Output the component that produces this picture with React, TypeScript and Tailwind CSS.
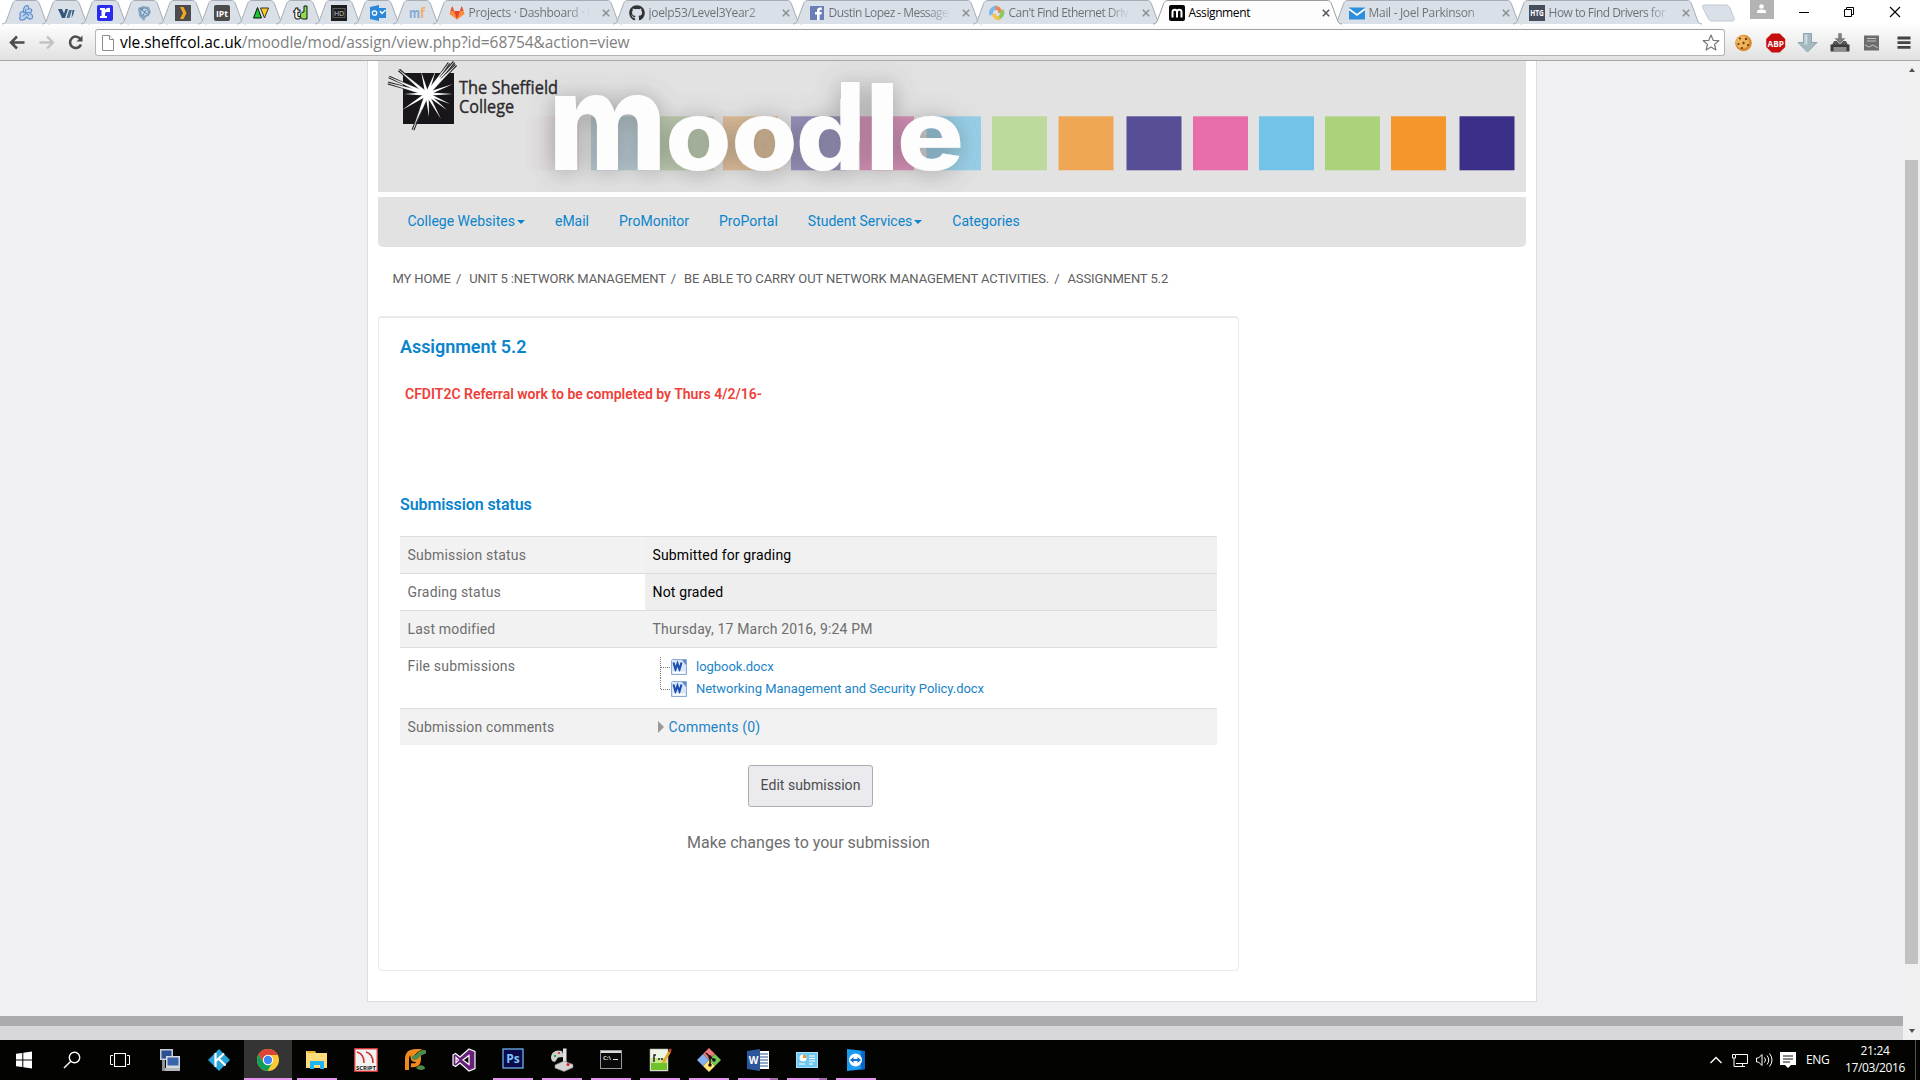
import type { ReactNode } from "react";
import { FaGithub } from "react-icons/fa";

/* ---------- favicons ---------- */

const Fav = ({ children }: { children: ReactNode }) => (
  <svg width="16" height="16" viewBox="0 0 16 16" className="shrink-0 overflow-visible">
    {children}
  </svg>
);

const txt = { fontFamily: "Open Sans, sans-serif", textAnchor: "middle" as const };

const pinned: ReactNode[] = [
  <Fav key="a">
    <g fill="#bcd2f0" stroke="#5f8fcc" strokeWidth="1.2">
      <path d="M8 .8c2-.8 3.200.8 2.200 3.200 2.500-.8 4.300.6 3.300 2.600-.6 1-1.600 1.200-2.300 1.300 3 1 4.500 4 2.800 5.500-1.500 1.300-4 .5-5.500-1.500-1 2-3 3.300-5 3.200-2-.2-2.700-2.500-.8-4C1.500 9.800 1.500 7.500 3.500 6.800c.8-.2 1.500 0 2 .2C5 5 6 1.600 8 .8z" />
      <path d="M8 4c-1 2 0 3 0 4s2 1 3 3M8 8c-1 2-2 2-3 3M5.500 7L8 8l3-.5" fill="none" />
    </g>
  </Fav>,
  <Fav key="b">
    <path d="M0 4h4l2 4.500L7.500 4H10L7 13H4z" fill="#35587a" />
    <path d="M8.500 13L11 5h3l-2.500 8z" fill="#4a7398" />
    <path d="M13.500 13L14.500 5h2l-1.500 5z" fill="#35587a" />
  </Fav>,
  <Fav key="c">
    <rect width="16" height="16" rx="2" fill="#2a2af0" />
    <path d="M3 3h5v2c1-1.500 3-2.500 5-2v4h-3c-1 0-2 .5-2 2v2h2v2H3v-2h1.500V5H3z" fill="#fff" />
  </Fav>,
  <Fav key="d">
    <path d="M2 3l5-2 6 1 2 5-2 4-3 1-2 4-3-3-2-2z" fill="#8aa6c0" />
    <circle cx="8.500" cy="7" r="4" fill="#c3d6e6" stroke="#5c84aa" strokeWidth=".8" />
    <path d="M6 5l5 4M7 10l3-5M4 3l3 2" stroke="#4f7ba5" strokeWidth=".9" />
  </Fav>,
  <Fav key="e">
    <rect width="16" height="16" fill="#4c4c4c" />
    <path d="M5 2h3.500l3 6-3 6H5l3-6z" fill="#f5a623" />
  </Fav>,
  <Fav key="f">
    <rect width="16" height="16" rx="2" fill="#4c4c4c" />
    <text x="8" y="11.500" fontSize="9" fontWeight="700" fill="#fff" textLength="12" lengthAdjust="spacingAndGlyphs" {...txt}>IPt</text>
  </Fav>,
  <Fav key="g">
    <path d="M4.500 2.500L8.500 13h-8z" fill="#19c832" stroke="#111" />
    <path d="M7.500 3h8l-4 10z" fill="#ffc81e" stroke="#333" />
  </Fav>,
  <Fav key="h">
    <text x="5" y="14" fontSize="16" fontWeight="800" fill="#fff" stroke="#111" strokeWidth="1" {...txt}>t</text>
    <path d="M12 1h3v13h-3c-4 1-5-6-1-7h1z" fill="#8ede4a" stroke="#111" />
  </Fav>,
  <Fav key="i">
    <rect y="0" width="16" height="16" fill="#1c1c1c" />
    <rect x="2" y="3.500" width="12" height="9" fill="none" stroke="#777" strokeWidth=".7" />
    <text x="8" y="10.500" fontSize="7" fill="#ccc" {...txt}>HD</text>
  </Fav>,
  <Fav key="j">
    <path d="M0 2l9-2v16l-9-2z" fill="#2b88d8" />
    <path d="M9 3h7v10H9z" fill="#2b88d8" />
    <circle cx="4.500" cy="8" r="2.200" fill="none" stroke="#fff" strokeWidth="1.300" />
    <path d="M10 6l2 2.500L15.500 5" fill="none" stroke="#fff" strokeWidth="1.300" />
  </Fav>,
  <Fav key="k">
    <text x="5.500" y="13" fontSize="14" fontWeight="700" fill="#85a9d2" textLength="11" lengthAdjust="spacingAndGlyphs" {...txt}>m</text>
    <text x="13.500" y="13" fontSize="14" fontWeight="700" fill="#f0b070" textLength="5" lengthAdjust="spacingAndGlyphs" {...txt}>f</text>
  </Fav>,
];

const gitlab = (
  <Fav>
    <path d="M8 14.500L.5 9l1-3L3.200 1 5.200 6h5.600l2-5 1.700 5 1 3z" fill="#fc8a3c" />
    <path d="M8 14.500L5.200 6h5.600z" fill="#e24329" />
    <path d="M3.200 1L1.500 6h3.700zM12.800 1l1.700 5h-3.700z" fill="#e2553a" />
  </Fav>
);
const facebook = (
  <Fav>
    <rect x="1" y="1" width="14" height="14" fill="#6a7fb8" />
    <path d="M8 15V9.500H6V7h2V5.500C8 3.500 9.300 2.500 11 2.500h1.800V5H11.500c-.7 0-.9.300-.9.900V7h2.200l-.3 2.500h-1.900V15z" fill="#fff" />
  </Fav>
);
const swirl = (
  <Fav>
    <g fill="none" strokeWidth="3.800">
      <path d="M2.500 10C.5 6 4 2.500 8 2.500" stroke="#7ab9ea" />
      <path d="M6.500 2.800C10 3 11 4.500 11.500 8" stroke="#ee8450" />
      <path d="M13 5c1.500 3.500-.5 7-3.500 8" stroke="#8cc860" />
      <path d="M10.500 13.500C7 13.500 5.500 12 4.500 9" stroke="#f6c34a" />
    </g>
  </Fav>
);
const moodleFav = (
  <Fav>
    <rect width="16" height="16" rx="2" fill="#050505" />
    <path d="M3.500 12.500V7c0-3 4.500-3 4.500 0v5.500V7c0-3 4.500-3 4.500 0v5.500" fill="none" stroke="#fff" strokeWidth="2" />
  </Fav>
);
const mail = (
  <Fav>
    <rect y="2.500" width="16" height="12" fill="#2b8fdc" />
    <path d="M0 4l8 6 8-6" fill="none" stroke="#fff" strokeWidth="1.600" />
  </Fav>
);
const htg = (
  <Fav>
    <rect width="16" height="16" fill="#454c5c" />
    <text x="8" y="11.200" fontSize="8.500" fontWeight="700" fill="#fff" textLength="13.500" lengthAdjust="spacingAndGlyphs" {...txt}>HTG</text>
  </Fav>
);

/* ---------- browser chrome ---------- */

const Shape = ({ w, active }: { w: number; active?: boolean }) => {
  const d = `M0 24C3 24 4 22 5 19L10.500 4C11.500 1.500 12.500 .5 15 .5H${w - 15}C${w - 12.5} .5 ${w - 11.5} 1.500 ${w - 10.5} 4L${w - 5} 19C${w - 4} 22 ${w - 3} 24 ${w} 24`;
  return (
    <svg className="absolute left-0 top-0" width={w} height="25" viewBox={`0 0 ${w} 25`}>
      <path d={active ? `${d}V25H0Z` : d} fill={active ? "#fdfdfd" : "#dae0e8"} />
      <path d={d} fill="none" stroke={active ? "#9d9d9d" : "#a9adb3"} />
    </svg>
  );
};

const Close = ({ dark }: { dark?: boolean }) => (
  <svg width="8" height="8" viewBox="0 0 8 8" className="shrink-0">
    <path d="M.8.8l6.400 6.400M7.200.8L.8 7.200" stroke={dark ? "#555" : "#8b8e93"} strokeWidth="1.500" />
  </svg>
);

const Tab = ({ icon, title, active, tight }: { icon: ReactNode; title: string; active?: boolean; tight?: boolean }) => (
  <div className={active ? "relative z-10 -mr-[9px] h-[25px] w-[189px] shrink-0" : "relative -mr-[9px] h-[25px] w-[189px] shrink-0"}>
    <Shape w={189} active={active} />
    <div className="relative flex h-[25px] items-center pl-4">
      {icon}
      <span
        className={
          active
            ? "ml-1 w-[122px] whitespace-nowrap text-[12px] tracking-[-0.4px] text-black"
            : tight
              ? "ml-1 w-[122px] whitespace-nowrap bg-gradient-to-r from-[#6b6f75] from-80% to-transparent bg-clip-text text-[12px] tracking-[-0.550px] text-transparent"
              : "ml-1 w-[122px] whitespace-nowrap bg-gradient-to-r from-[#6b6f75] from-80% to-transparent bg-clip-text text-[12px] tracking-[-0.320px] text-transparent"
        }
      >
        {title}
      </span>
      <span className="ml-[11.500px]">
        <Close dark={active} />
      </span>
    </div>
  </div>
);

const TabStrip = () => (
  <div className="flex h-[25px] bg-white pl-[2.400px]">
    {pinned.map((icon, i) => (
      <div key={i} className="relative -mr-[8.900px] h-[25px] w-12 shrink-0">
        <Shape w={48} />
        <div className="relative flex h-[26px] items-center justify-center">{icon}</div>
      </div>
    ))}
    <Tab icon={gitlab} title="Projects · Dashboard · G" />
    <Tab icon={<FaGithub size={16} color="#333" className="shrink-0" />} title="joelp53/Level3Year2" />
    <Tab icon={facebook} title="Dustin Lopez - Message" tight />
    <Tab icon={swirl} title="Can't Find Ethernet Driv" tight />
    <Tab icon={moodleFav} title="Assignment" active />
    <Tab icon={mail} title="Mail - Joel Parkinson" />
    <Tab icon={htg} title="How to Find Drivers for" tight />
    <svg width="34" height="18" viewBox="0 0 34 18" className="ml-2 mt-1 shrink-0">
      <path d="M3 1h22c2 0 3 1 4 3l4 10c.6 2 0 3-2 3H11c-2 0-3-1-4-3L2 4C1.500 2 1.500 1 3 1z" fill="#dae0e8" stroke="#c3c8ce" />
    </svg>
    <div className="ml-[15.100px] flex h-[19px] w-6 shrink-0 items-center justify-center bg-[#b3b3b3]">
      <svg width="9" height="10" viewBox="0 0 9 10" fill="#fff" className="-mt-[2px]">
        <circle cx="4.500" cy="2.500" r="2.300" />
        <path d="M0 9V7.500C0 6 2 5.500 4.500 5.500S9 6 9 7.500V9z" />
      </svg>
    </div>
    <svg width="130" height="24" viewBox="1790 0 130 24" className="ml-4 shrink-0" fill="none" stroke="#000">
      <path d="M1799 12.500h10" />
      <path d="M1844.500 9.500h7v7h-7zM1846.500 9.500v-2h7v7h-2" />
      <path d="M1890 7l10 10M1900 7l-10 10" strokeWidth="1.100" />
    </svg>
  </div>
);

const Toolbar = () => (
  <div className="flex h-9 items-center border-b border-b-[#a8a8a8] bg-gradient-to-b from-[#fdfdfd] to-[#e1e1e1]">
    <svg width="95" height="34" viewBox="0 26 95 34" className="shrink-0" fill="none">
      <path d="M24.500 42.500H11.500M17 36.500l-6 6 6 6" stroke="#4c4c4c" strokeWidth="2.500" />
      <path d="M39.500 42.500h13M47 36.500l6 6-6 6" stroke="#c3c3c3" strokeWidth="2.300" />
      <path d="M80.500 39.200a5.700 5.700 0 1 0 .5 5.300" stroke="#4c4c4c" strokeWidth="2.500" />
      <path d="M82.500 35.500v6h-6z" fill="#4c4c4c" />
    </svg>
    <div className="flex h-[27px] w-[1630px] items-center rounded-[3px] border border-[#b5b5b5] border-t-[#a0a0a3] bg-white pl-[6px] pr-[4px]">
      <svg width="12" height="16" viewBox="0 0 12 16" fill="#fff" stroke="#8b8b8b" className="shrink-0">
        <path d="M.5.500h7l4 4v11H.5z" />
        <path d="M7.500.500v4h4" />
      </svg>
      <span className="-mt-px ml-[6px] whitespace-nowrap text-[15.500px] leading-[22px] tracking-[-0.070px] text-[#808080]">
        <span className="text-black">vle.sheffcol.ac.uk</span>/moodle/mod/assign/view.php?id=68754&amp;action=view
      </span>
      <svg width="18" height="18" viewBox="0 0 18 18" className="ml-auto" fill="#fff" stroke="#777" strokeWidth="1.200" strokeLinejoin="round">
        <path d="M9 1l2.200 5.300 5.600.4-4.300 3.700 1.400 5.600L9 13l-4.900 3 1.400-5.600L1.200 6.700l5.600-.4z" />
      </svg>
    </div>
    <svg width="195" height="34" viewBox="1725 26 195 34" className="shrink-0">
      <circle cx="1743.500" cy="43" r="8.300" fill="#d98a2b" />
      <circle cx="1742.500" cy="42" r="6.500" fill="#efb45c" />
      <g fill="#6b3a10">
        <circle cx="1740" cy="38.500" r="1.100" />
        <circle cx="1746" cy="39" r="1.200" />
        <circle cx="1738.500" cy="44" r="1.100" />
        <circle cx="1743.500" cy="43" r="1.200" />
        <circle cx="1748" cy="45" r="1.100" />
        <circle cx="1742" cy="48" r="1.100" />
      </g>
      <path d="M1771.800 33.500h7.800l5.600 5.600v7.800l-5.600 5.600h-7.800l-5.600-5.600v-7.800z" fill="#c70d0d" />
      <text x="1775.700" y="46.700" fontSize="9.500" fontWeight="700" fill="#fff" textLength="16.500" lengthAdjust="spacingAndGlyphs" {...txt}>ABP</text>
      <path d="M1803.500 33.500h8v9h5.500l-9.500 9.500-9.500-9.500h5.500z" fill="#a4bac2" stroke="#8fa5ad" />
      <path d="M1804.500 34.500h3v10h-3z" fill="#c9d9de" />
      <path d="M1834 41h12l2 4h-16z" fill="#555" />
      <path d="M1830.500 44.500h19v7h-19z" fill="#3c3c3c" />
      <path d="M1833.500 47h13v4h-13z" fill="#8e8e8e" />
      <path d="M1838 33h4v5h4l-6 6-6-6h4z" fill="#7d7d7d" stroke="#e8e8e8" strokeWidth=".6" />
      <path d="M1864 35.500h15v15h-15z" fill="#6d6d6d" />
      <path d="M1867 38.500h9M1867 41h9M1865 45l4 2 4-2 5 3" stroke="#c4c4c4" fill="none" />
      <path d="M1897.500 38h13M1897.500 42.700h13M1897.500 47.400h13" stroke="#444" strokeWidth="2.800" />
    </svg>
  </div>
);

/* ---------- Moodle page ---------- */

const squares = [
  { x: 525, w: 54, c: "url(#fade)", o: 0.6 },
  { x: 591, w: 54, c: "#a5bfca", o: 0.75 },
  { x: 660, w: 54, c: "#b8cba8", o: 0.85 },
  { x: 723, w: 55, c: "#deba92", o: 0.95 },
  { x: 791, w: 55, c: "#9690bd", o: 1 },
  { x: 860, w: 54, c: "#dc8fba", o: 1 },
  { x: 926.5, w: 54.5, c: "#97cfe8", o: 1 },
  { x: 992, w: 55, c: "#bdd99c", o: 1 },
  { x: 1058.5, w: 55, c: "#f0a755", o: 1 },
  { x: 1126.5, w: 55, c: "#574e98", o: 1 },
  { x: 1193, w: 55, c: "#e96dab", o: 1 },
  { x: 1259, w: 55, c: "#73c3e9", o: 1 },
  { x: 1325, w: 55, c: "#abd37c", o: 1 },
  { x: 1391, w: 55, c: "#f4962b", o: 1 },
  { x: 1459.5, w: 55, c: "#3b3088", o: 1 },
];

/* Outer tips of the star burst, all running to its centre. */
const CX = 427;
const CY = 94;
const tips = [
  [388, 83], [389, 77], [399, 70], [421, 71], [436, 70], [449, 63], [454, 62], [456, 65],
  [453, 84], [453, 94], [450, 104], [441, 119], [447, 110], [429, 117], [413, 130], [415, 124], [402, 110], [404, 94],
];

const Ray = ({ x, y }: { x: number; y: number }) => {
  const len = Math.hypot(x - CX, y - CY);
  const px = ((y - CY) / len) * 1.7;
  const py = (-(x - CX) / len) * 1.7;
  const outside = len > 31;
  return (
    <g>
      {outside && <path d={`M${x} ${y}L${(x + CX) / 2} ${(y + CY) / 2}`} stroke="#222" strokeWidth="3" />}
      <path d={`M${x} ${y}L${CX + px} ${CY + py}L${CX - px} ${CY - py}Z`} fill="#fff" stroke={outside ? "#fff" : "none"} strokeWidth=".4" />
    </g>
  );
};

const letters = [
  { ch: "m", x: 548, size: 136, len: 119 },
  { ch: "o", x: 665.5, size: 98, len: 66 },
  { ch: "o", x: 731.5, size: 98, len: 66 },
  { ch: "d", x: 796, size: 98, len: 69 },
  { ch: "l", x: 865, size: 119, len: 35 },
  { ch: "e", x: 897, size: 98, len: 67 },
];

const Banner = () => (
  <svg width="1148" height="131" viewBox="378 61 1148 131" className="block bg-[#e2e2e2]">
    <defs>
      <linearGradient id="fade">
        <stop offset="0" stopColor="#e2e2e2" />
        <stop offset="1" stopColor="#d9c3cd" />
      </linearGradient>
      <filter id="halo" filterUnits="userSpaceOnUse" x="480" y="40" width="560" height="180">
        <feDropShadow dx="0" dy="2" stdDeviation="12" floodColor="#555" floodOpacity=".5" />
      </filter>
    </defs>
    {squares.map((s) => (
      <rect key={s.x} x={s.x} y="116.300" width={s.w} height="54" fill={s.c} opacity={s.o} />
    ))}
    <g filter="url(#halo)" fill="#fdfdfd" fontFamily="Inter, sans-serif" fontWeight="800">
      {letters.map((l) => (
        <text key={l.x} x={l.x} y="170" fontSize={l.size} textLength={l.len} lengthAdjust="spacingAndGlyphs">{l.ch}</text>
      ))}
      <rect x="841" y="82" width="18.500" height="60" rx="1" />
    </g>
    <rect x="403" y="73" width="51" height="51" fill="#18161a" />
    {tips.map(([x, y]) => (
      <Ray key={`${x}-${y}`} x={x} y={y} />
    ))}
    <circle cx="427" cy="94" r="4" fill="#fff" />
    <g fill="#2b2a2d" stroke="#2b2a2d" strokeWidth=".4" fontFamily="Open Sans, sans-serif" fontSize="18.500">
      <text x="459" y="93.500" textLength="99" lengthAdjust="spacingAndGlyphs">The Sheffield</text>
      <text x="459" y="113" textLength="55" lengthAdjust="spacingAndGlyphs">College</text>
    </g>
  </svg>
);

const nav = [
  { t: "College Websites", caret: true },
  { t: "eMail" },
  { t: "ProMonitor" },
  { t: "ProPortal" },
  { t: "Student Services", caret: true },
  { t: "Categories" },
];

const Nav = () => (
  <nav className="mt-[5px] flex h-[50px] items-center rounded-b-[5px] bg-[#e2e2e2] pl-[29.500px] text-[14px] text-[#0a84cc]">
    {nav.map((n) => (
      <span key={n.t} className="mr-[30px] flex items-center pb-[2px]">
        {n.t}
        {n.caret && <span className="ml-[2px] mt-px border-x-4 border-t-4 border-x-transparent border-t-[#0a84cc]" />}
      </span>
    ))}
  </nav>
);

const crumbs = ["MY HOME", "UNIT 5 :NETWORK MANAGEMENT", "BE ABLE TO CARRY OUT NETWORK MANAGEMENT ACTIVITIES.", "ASSIGNMENT 5.2"];

const WordIcon = () => (
  <svg width="16" height="16" viewBox="0 0 16 16" className="shrink-0">
    <path d="M1.500.500h14v15H.5v-14z" fill="#dbe7f7" stroke="#8eabd6" />
    <path d="M11 1h4v5z" fill="#5b86cc" />
    <path d="M2.500 3.500l2 7 2-6 2 6 2-7" fill="none" stroke="#1c4fb0" strokeWidth="2.100" />
    <path d="M2 13.500h12" stroke="#fff" strokeWidth="2" />
  </svg>
);

const FileLine = ({ name, last }: { name: string; last?: boolean }) => (
  <div className="flex h-[22px] items-center">
    <svg width="11" height="22" viewBox="0 0 11 22" className="shrink-0" fill="none" stroke="#777" strokeDasharray="1 1">
      <path d={last ? "M.5 0v11" : "M.5 1v21"} />
      <path d="M1 11.500h10" />
    </svg>
    <WordIcon />
    <span className="ml-[9px] text-[13px] tracking-[-0.030px] text-[#1a84c8]">{name}</span>
  </div>
);

const Row = ({ label, tone, h, children }: { label: string; tone: string; h: string; children: ReactNode }) => (
  <div className={`flex border-t border-[#ddd] ${h} ${tone}`}>
    <div className="w-[245px] pl-[7.500px] leading-9 tracking-[0.180px]">{label}</div>
    {children}
  </div>
);

const Submission = () => (
  <section className="mt-[27px] h-[655px] w-[861px] rounded-[4px] border border-t-2 border-[#e9e9ee] px-[21px]">
    <h2 className="mt-[17px] text-[18px] font-semibold leading-6 tracking-[-0.050px] text-[#0a84cc]">Assignment 5.2</h2>
    <p className="ml-[5px] mt-[25px] text-[14px] font-semibold leading-5 text-[#ee4038]">CFDIT2C Referral work to be completed by Thurs 4/2/16-</p>
    <h3 className="mt-[89px] text-[16px] font-semibold leading-6 tracking-[-0.080px] text-[#0a84cc]">Submission status</h3>
    <div className="mt-[19px] w-[817px] text-[14px] text-[#6e6e6e]">
      <Row label="Submission status" tone="bg-[#f2f2f2]" h="h-[37px]">
        <div className="flex-1 bg-[#f0f0f0] pl-[7.500px] leading-9 tracking-[0.160px] text-black">Submitted for grading</div>
      </Row>
      <Row label="Grading status" tone="bg-white" h="h-[37px]">
        <div className="flex-1 bg-[#eee] pl-[7.500px] leading-9 tracking-[0.160px] text-black">Not graded</div>
      </Row>
      <Row label="Last modified" tone="bg-[#f2f2f2]" h="h-[37px]">
        <div className="flex-1 pl-[7.500px] leading-9 tracking-[0.170px]">Thursday, 17 March 2016, 9:24 PM</div>
      </Row>
      <Row label="File submissions" tone="bg-white" h="h-[61px]">
        <div className="flex-1 pl-[15px] pt-[8px]">
          <FileLine name="logbook.docx" />
          <FileLine name="Networking Management and Security Policy.docx" last />
        </div>
      </Row>
      <Row label="Submission comments" tone="bg-[#f2f2f2]" h="h-[37px]">
        <div className="flex h-9 flex-1 items-center pl-[13px] text-[#1a84c8]">
          <span className="mr-[4.500px] border-y-[6px] border-l-[6px] border-y-transparent border-l-[#999]" />
          <span className="tracking-[0.180px]">Comments (0)</span>
        </div>
      </Row>
    </div>
    <div className="flex flex-col items-center">
      <div className="ml-1 mt-5 flex h-[42px] w-[125px] items-center justify-center rounded-[3px] border border-[#adadb0] bg-[#ebebef] pb-px text-[14px] tracking-[0.040px] text-[#4c4c4c]">
        Edit submission
      </div>
      <p className="mt-6 text-[16px] leading-6 text-[#6e6e6e]">Make changes to your submission</p>
    </div>
  </section>
);

const Page = () => (
  <div className="flex h-[979px]">
    <div className="flex w-[1903px] flex-col bg-[#f0f0f2]">
      <div className="h-[955px]">
        <main className="ml-[367px] h-[941px] w-[1170px] border-x border-b border-[#dcdcde] bg-white pl-[10px] pr-[10px] font-['Roboto',sans-serif]">
          <Banner />
          <Nav />
          <div className="ml-[14.500px] mt-[22px] flex h-5 items-center text-[13px] tracking-[-0.110px] text-[#606060]">
            {crumbs.map((c, i) => (
              <span key={c} className="whitespace-nowrap">
                {c}
                {i < crumbs.length - 1 && <span className="ml-[5px] mr-2">/</span>}
              </span>
            ))}
          </div>
          <Submission />
        </main>
      </div>
      <div className="h-[10px] bg-[#ababad]" />
      <div className="h-[14px] bg-[#d8d8da]" />
    </div>
    <div className="flex w-[17px] flex-col items-center justify-between bg-[#f0f0f0]">
      <span className="mt-[7px] border-x-[3.500px] border-b-4 border-x-transparent border-b-[#505050]" />
      <span className="mb-[70px] mt-[88px] w-[13px] flex-1 bg-[#c1c1c1]" />
      <span className="-mt-[5px] mb-[7px] border-x-[3.500px] border-t-4 border-x-transparent border-t-[#505050]" />
    </div>
  </div>
);

/* ---------- taskbar ---------- */

const Ico = ({ children }: { children: ReactNode }) => (
  <svg width="24" height="24" viewBox="0 0 24 24">{children}</svg>
);

const apps: { icon: ReactNode; state?: "active" | "open" | "stack" }[] = [
  {
    icon: (
      <Ico>
        <path d="M2 1h13v11H2z" fill="#c9ced3" /><path d="M3.500 2.500h10v8h-10z" fill="#2c4f92" />
        <path d="M4 12h3v11H4z" fill="#8c9197" /><path d="M8 8h14v12H8z" fill="#d5dadd" />
        <path d="M9.500 9.500h11v8h-11z" fill="#3a64ac" /><path d="M7 20h15v3H7z" fill="#b4b9be" />
      </Ico>
    ),
  },
  {
    icon: (
      <Ico>
        <path d="M12 1l11 11-11 11L1 12z" fill="#2aa5d8" />
        <path d="M8.500 5v14M17 5.500L9 13M12 11l6.500 6.500" stroke="#fff" strokeWidth="2.200" fill="none" />
      </Ico>
    ),
  },
  {
    icon: (
      <Ico>
        <circle cx="12" cy="12" r="11" fill="#fbc934" />
        <path d="M12 1A11 11 0 0 1 21.900 7H12L7.500 14.500 2.500 6.500A11 11 0 0 1 12 1z" fill="#db4437" />
        <path d="M2.500 6.500A11 11 0 0 0 11.500 23L16.500 14.500H7.500z" fill="#0f9d58" />
        <circle cx="12" cy="12" r="5.200" fill="#fff" /><circle cx="12" cy="12" r="4.200" fill="#4285f4" />
      </Ico>
    ),
    state: "active",
  },
  {
    icon: (
      <Ico>
        <path d="M1 3h9l1 2h11v15H1z" fill="#fddc7a" /><path d="M2 3h8v2H2z" fill="#e8b52c" />
        <path d="M5 13h14v8h-4v-4H9v4H5z" fill="#1eb4f5" />
      </Ico>
    ),
    state: "open",
  },
  {
    icon: (
      <Ico>
        <rect x=".7" y=".7" width="22.600" height="22.600" fill="#f2f2f2" stroke="#cc3333" strokeWidth="1.400" />
        <path d="M3 4c4 1 7 5 7 11M12 4c4 1 7 5 7 11" fill="none" stroke="#d02a2a" strokeWidth="1.500" />
        <text x="12" y="22" fontSize="6" fontWeight="700" fill="#111" textLength="20" {...txt}>SCRIPT</text>
      </Ico>
    ),
  },
  {
    icon: (
      <Ico>
        <path d="M4 22V11c0-5 3-8 9-8-4 3-4 6-3 8 2 2 4 1 6 0 0 5-3 7-8 6" fill="none" stroke="#f08a1e" strokeWidth="4" />
        <path d="M11 9.500c4 1.500 4-5.500 10-5.500" fill="none" stroke="#4f8a4a" strokeWidth="4.500" strokeLinecap="round" />
        <path d="M13 20c3-4 8-3 9 0 0 2-6 3-9 0z" fill="#4f8a4a" />
      </Ico>
    ),
  },
  {
    icon: (
      <Ico>
        <path d="M17 1l6 2.500v17L17 23l-9-8-4.500 3.500L1 17V7l2.500-1.500L8 9z" fill="#68217a" stroke="#fff" strokeWidth="1.200" />
        <path d="M17 7.500v9L11 12zM4 9.500v5L6.500 12z" fill="#000" stroke="#fff" strokeWidth="1.200" />
      </Ico>
    ),
  },
  {
    icon: (
      <Ico>
        <rect x="2" y="1" width="20" height="19" fill="#0b0b4b" stroke="#6fb0e8" strokeWidth="1.300" />
        <text x="12" y="15" fontSize="12" fontWeight="700" fill="#7ec3f5" {...txt}>Ps</text>
      </Ico>
    ),
    state: "open",
  },
  {
    icon: (
      <Ico>
        <path d="M1 10C1 4 6 1 12 3l2 6-6 .5-3 4.500-3-1z" fill="#cfcfcf" />
        <path d="M13 .5h3.500V15H13z" fill="#e2e2e2" />
        <path d="M5 17l9-4 9 3.500v3L14 23.500 5 20z" fill="#d4d4d4" stroke="#888" strokeWidth=".6" />
        <circle cx="9" cy="5" r="1.100" fill="#c33" /><circle cx="5" cy="8" r="1.200" fill="#3a3" /><circle cx="18" cy="16.500" r="1.500" fill="#d22" />
      </Ico>
    ),
    state: "open",
  },
  {
    icon: (
      <Ico>
        <rect x="1.500" y="2.500" width="21" height="18" fill="#0a0a0a" stroke="#999" />
        <path d="M2 3h20v2H2z" fill="#ddd" />
        <text x="8" y="12" fontSize="6" fontWeight="700" fill="#ddd" {...txt}>C:\</text>
        <path d="M14 11.500h5" stroke="#ddd" />
      </Ico>
    ),
    state: "open",
  },
  {
    icon: (
      <Ico>
        <path d="M2 1h18v22H2z" fill="#eef5e4" stroke="#aaa" strokeWidth=".6" />
        <path d="M3 14h16v8H3z" fill="#6ec22a" /><path d="M3 10h16v5H3z" fill="#c5e88a" />
        <path d="M6 14V7h2M10 11h2M13 11h2" stroke="#222" strokeWidth="1.500" fill="none" />
        <path d="M22 3l-7 12" stroke="#e9a52c" strokeWidth="2.600" /><path d="M23 1l-2 3" stroke="#b5452c" strokeWidth="2.600" />
      </Ico>
    ),
    state: "open",
  },
  {
    icon: (
      <Ico>
        <path d="M12 0l6 6-6 6-6-6z" fill="#ee7b7b" /><path d="M18 6l6 6-6 6-6-6z" fill="#75c656" />
        <path d="M6 6l6 6-6 6-6-6z" fill="#85b1f0" /><path d="M12 12l6 6-6 6-6-6z" fill="#ffe27a" />
        <path d="M9 5l4 4v8M13 9l4 3" stroke="#111" strokeWidth="1.400" fill="none" />
        <circle cx="13" cy="17" r="1.700" fill="#111" /><circle cx="17" cy="12" r="1.700" fill="#111" /><circle cx="13" cy="9" r="1.700" fill="#111" />
      </Ico>
    ),
    state: "open",
  },
  {
    icon: (
      <Ico>
        <path d="M12 3h11v18H12z" fill="#fff" />
        <path d="M14 6h8M14 9h8M14 12h8M14 15h8M14 18h8" stroke="#2b579a" />
        <path d="M1 3l13-2v22L1 21z" fill="#2b579a" />
        <text x="7.500" y="16" fontSize="10" fontWeight="700" fill="#fff" {...txt}>W</text>
      </Ico>
    ),
    state: "stack",
  },
  {
    icon: (
      <Ico>
        <rect x="1.500" y="4.500" width="21" height="15" fill="#6fc8f2" stroke="#a9e0fa" />
        <circle cx="8" cy="10" r="3.500" fill="#fff" /><path d="M8 10V6.500A3.500 3.500 0 0 1 11.500 10z" fill="#e8962c" />
        <path d="M14 8h6M14 10.500h6M14 13h6M4 16h6M14 16h4" stroke="#fff" strokeWidth="1.200" />
      </Ico>
    ),
    state: "stack",
  },
  {
    icon: (
      <Ico>
        <path d="M3 1l18 2v18L3 23z" fill="#1a9af0" /><path d="M17 3l4 0v18l-4 1z" fill="#0766c9" />
        <circle cx="11.500" cy="12" r="6.500" fill="#fff" />
        <path d="M6 12l3.500-3v2h4V9l3.500 3-3.500 3v-2h-4v2z" fill="#1273d0" />
      </Ico>
    ),
    state: "open",
  },
];

const Taskbar = () => (
  <footer className="flex h-10 bg-[#030402] text-white">
    <svg width="146" height="40" viewBox="0 0 146 40" className="shrink-0" fill="none" stroke="#fff">
      <path d="M16 13.800l6.300-.9v6.600H16zM23.300 12.800L32 11.600v7.900h-8.700zM16 20.500h6.300v6.600l-6.300-.9zM23.300 20.500H32v7.900l-8.700-1.200z" fill="#fff" stroke="none" />
      <circle cx="74.500" cy="17.500" r="5.200" strokeWidth="1.400" />
      <path d="M70.800 21.200L64 28" strokeWidth="1.400" />
      <path d="M114.500 13.500h11v13h-11z" strokeWidth="1.100" />
      <path d="M113 15.500h-2.500v9h2.500M127 15.500h2.500v9H127" />
    </svg>
    {apps.map((a, i) => (
      <div
        key={i}
        className={a.state === "active" ? "mr-px flex w-12 flex-col items-center bg-[#343434]" : "mr-px flex w-12 flex-col items-center"}
      >
        <div className="flex h-[38px] items-center pt-[1px]">{a.icon}</div>
        {a.state === "active" && <div className="h-[2px] w-12 bg-[#e594f0]" />}
        {a.state === "open" && <div className="h-[2px] w-10 bg-[#e594f0]" />}
        {a.state === "stack" && <div className="h-[2px] w-10 border-r-8 border-[#a96cb2] bg-[#e594f0]" />}
      </div>
    ))}
    <svg width="96" height="40" viewBox="1708 1040 96 40" className="ml-auto shrink-0" fill="none" stroke="#fff">
      <path d="M1710.500 1063l5.500-5.500 5.500 5.500" strokeWidth="1.400" />
      <path d="M1736 1054.500h11.500v9h-11.500M1732.500 1054.500h3v3.500h-3zM1734 1058v8.500h4M1742.500 1064v2.500M1738 1066.500h7" />
      <path d="M1756.500 1058h2l3.500-3.500v11l-3.500-3.500h-2zM1764.500 1057.500q2 2.500 0 5M1767 1055.500q3.500 4.500 0 9M1769.500 1053.500q5 6.500 0 13" />
      <path d="M1780 1052h16v13h-5l-3 3-3-3h-5z" fill="#fff" stroke="none" />
      <path d="M1783 1056h10M1783 1059h10M1783 1062h7" stroke="#111" />
    </svg>
    <span className="ml-[2px] w-7 text-[12px] leading-10 tracking-[-0.300px]">ENG</span>
    <div className="ml-[4px] flex w-[74px] flex-col items-center pt-[2px] text-[12px] leading-[17px] tracking-[-0.350px]">
      <span>21:24</span>
      <span>17/03/2016</span>
    </div>
    <div className="ml-[3px] mr-1 w-px bg-[#555]" />
  </footer>
);

export default function App() {
  return (
    <div className="h-[1080px] w-[1920px] overflow-hidden bg-white font-['Open_Sans',sans-serif]">
      <TabStrip />
      <Toolbar />
      <Page />
      <Taskbar />
    </div>
  );
}
